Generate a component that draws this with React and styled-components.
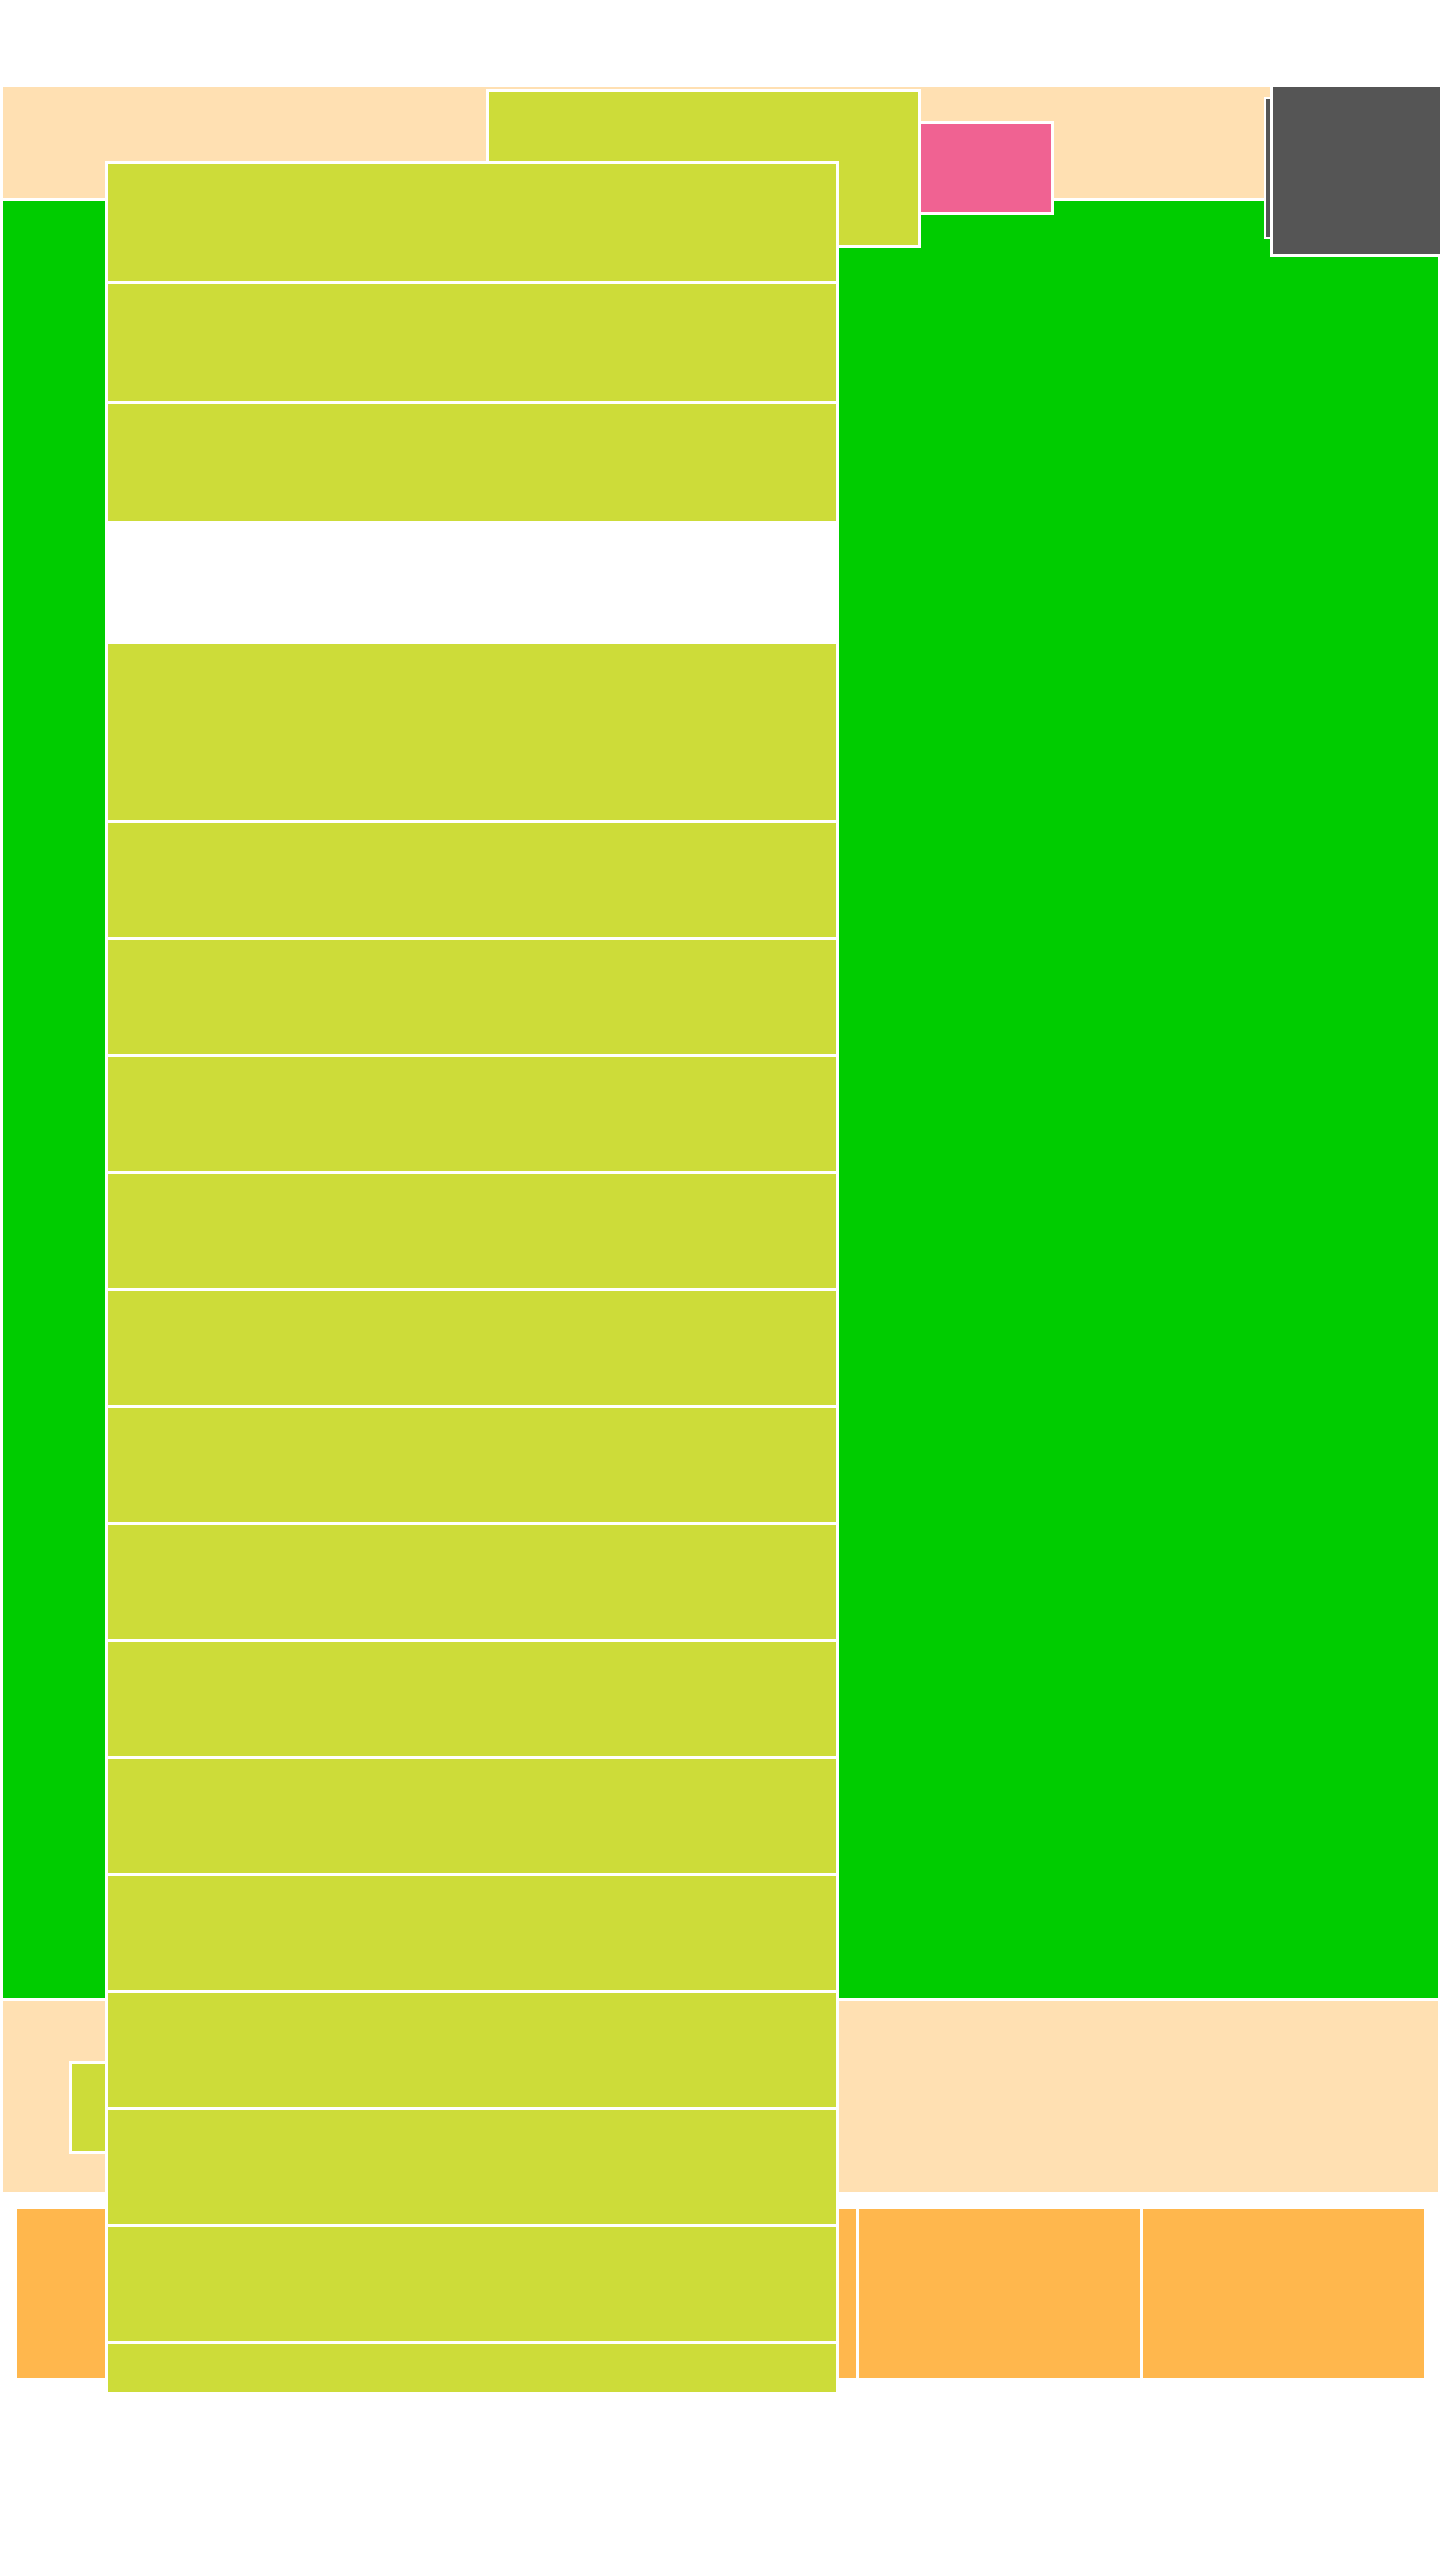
import React from 'react';
import styled, { createGlobalStyle } from 'styled-components';

const GlobalStyle = createGlobalStyle`
  body {
    margin: 0;
    background: #ffffff;
    font-family: 'Liberation Sans', Arial, sans-serif;
  }
`;

const tones = {
  peach: '#ffe0b2',
  lime: '#cddc39',
  green: '#00cc00',
  pink: '#f06292',
  orange: '#ffb74d',
  slate: '#555555',
  white: '#ffffff',
};

const Page = styled.div`
  position: relative;
  width: 1440px;
  min-height: 2560px;
  box-sizing: border-box;
  padding: 87px 2px 0 3px;
  display: flex;
  flex-direction: column;
  gap: 3px;
  overflow: hidden;
`;

const Header = styled.header`
  position: relative;
  height: 111px;
  background: ${tones.peach};
`;

// floating things hanging off the header
const Popover = styled.div`
  position: absolute;
  box-sizing: border-box;
  border: ${p => p.$edge || 3}px solid #ffffff;
  background: ${p => tones[p.$tone]};
  z-index: ${p => p.$layer || 1};
`;

const SearchPanel = styled(Popover)`
  left: 483px;
  top: 2px;
  width: 435px;
  height: 159px;
`;

const Tag = styled(Popover)`
  left: 915px;
  top: 34px;
  width: 136px;
  height: 94px;
`;

const StackBack = styled(Popover)`
  left: 1261px;
  top: 10px;
  width: 180px;
  height: 142px;
`;

const StackFront = styled(Popover)`
  left: 1267px;
  top: -3px;
  width: 180px;
  height: 173px;
`;

const Main = styled.main`
  height: 1797px;
  background: ${tones.green};
`;

const Footer = styled.footer`
  height: 191px;
  box-sizing: border-box;
  padding: 60px 0 0 66px;
  display: flex;
  align-items: flex-start;
  background: ${tones.peach};
`;

const Chip = styled.div`
  width: 70px;
  height: 93px;
  box-sizing: border-box;
  border: 3px solid #ffffff;
  background: ${tones.lime};
`;

const CardRow = styled.section`
  margin-top: 14px;
  padding: 0 14px;
  height: 169px;
  display: grid;
  grid-template-columns: 1fr 1fr 281px 281px;
  gap: 3px;
`;

const Card = styled.div`
  background: ${tones.orange};
`;

const Menu = styled.div`
  position: absolute;
  left: 105px;
  top: 161px;
  width: 734px;
  height: 2234px;
  box-sizing: border-box;
  border: 3px solid #ffffff;
  background: #ffffff;
  overflow: hidden;
  z-index: 3;
  display: flex;
  flex-direction: column;
  gap: 3px;
`;

const MenuItem = styled.div`
  flex: none;
  height: ${p => p.$h}px;
  background: ${p => (p.$blank ? tones.white : tones.lime)};
`;

const menuRows = [
  { h: 117 },
  { h: 117 },
  { h: 117 },
  { h: 117, blank: true },
  { h: 176 },
  ...Array.from({ length: 14 }, () => ({ h: 114 })),
];

export default function App() {
  return (
    <>
      <GlobalStyle />
      <Page>
        <Header>
          <SearchPanel $tone="lime" />
          <Tag $tone="pink" $layer={2} />
          <StackBack $tone="slate" $edge={2} />
          <StackFront $tone="slate" $layer={2} />
        </Header>
        <Main />
        <Footer>
          <Chip />
        </Footer>
        <CardRow>
          <Card />
          <Card />
          <Card />
          <Card />
        </CardRow>
        <Menu>
          {menuRows.map((row, i) => (
            <MenuItem key={i} $h={row.h} $blank={row.blank} />
          ))}
        </Menu>
      </Page>
    </>
  );
}
